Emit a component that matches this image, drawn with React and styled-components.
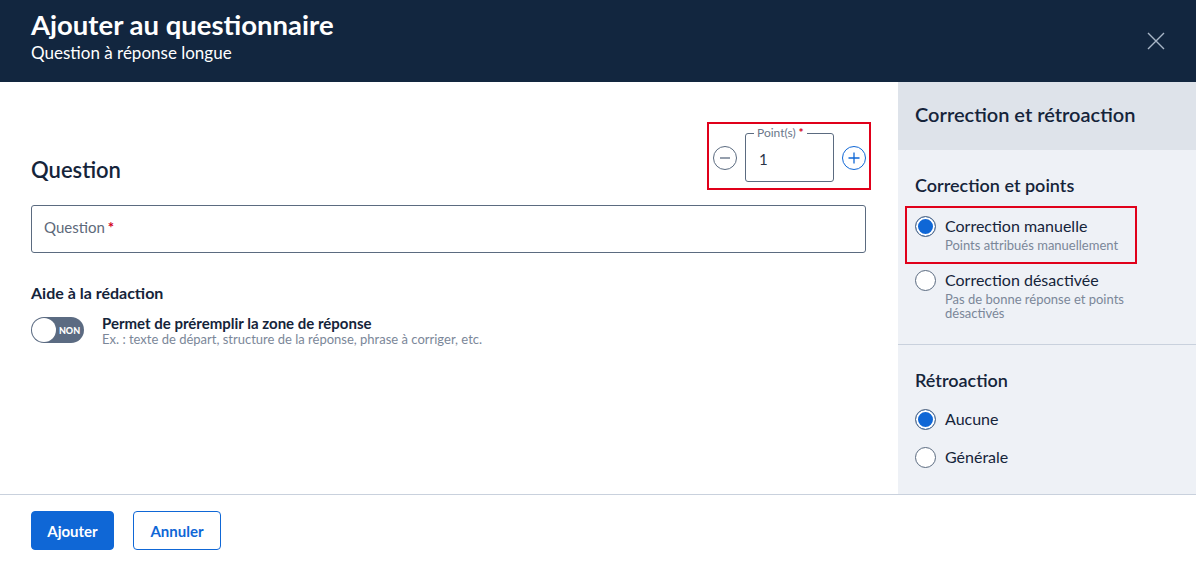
import React from 'react'
import styled, { createGlobalStyle } from 'styled-components'

const Global = createGlobalStyle`
  html, body { margin: 0; padding: 0; background: #fff; }
  body { font-family: Lato, "Noto Sans", sans-serif; color: #15243a; }
  * { box-sizing: border-box; }
`

const Page = styled.div`
  width: 1196px;
  height: 572px;
  display: flex;
  flex-direction: column;
  overflow: hidden;
`

const Header = styled.header`
  height: 82px;
  background: #12263f;
  color: #fff;
  display: flex;
  align-items: flex-start;
  justify-content: space-between;
  padding: 8px 28px 0 31px;
  h1 {
    margin: 0;
    font-size: 27.5px;
    line-height: 34px;
    font-weight: 700;
  }
  p {
    margin: 0;
    font-size: 17px;
    line-height: 22px;
  }
`

const CloseButton = styled.button`
  background: none;
  border: 0;
  padding: 0;
  margin-top: 21px;
  width: 24px;
  height: 24px;
  display: flex;
  align-items: center;
  justify-content: center;
`

const Body = styled.div`
  flex: 1;
  display: flex;
  border-bottom: 1px solid #c9d1dd;
`

const Main = styled.main`
  flex: 1;
  padding: 40px 32px 0 31px;
`

const TitleRow = styled.div`
  display: flex;
  justify-content: space-between;
  align-items: flex-end;
`

const SectionTitle = styled.h2`
  margin: 0 0 6px;
  font-size: 22px;
  line-height: 28px;
  font-weight: 600;
`

const Highlight = styled.div`
  border: 2px solid #e0001a;
  display: flex;
  align-items: center;
  gap: ${p => p.$gap || 0}px;
  padding: ${p => p.$pad};
  margin: ${p => p.$margin || 0};
  width: ${p => (p.$width ? `${p.$width}px` : 'auto')};
`

const RoundButton = styled.button`
  width: 24px;
  height: 24px;
  border-radius: 50%;
  border: 1px solid ${p => (p.$active ? '#0f67d6' : '#5b6b80')};
  background: #fff;
  padding: 0;
  display: flex;
  align-items: center;
  justify-content: center;
`

const PointsBox = styled.div`
  position: relative;
  width: 89px;
  height: 49px;
  border: 1px solid #5b6b80;
  border-radius: 3px;
  font-size: 15px;
  padding: 16px 0 0 13px;
  color: #2a3547;
  span.label {
    position: absolute;
    top: -8px;
    left: 8px;
    background: #fff;
    padding: 0 3px;
    font-size: 12px;
    line-height: 14px;
    color: #6b778a;
  }
`

const Req = styled.span`
  color: #d2001c;
  font-weight: 700;
  margin-left: 3px;
`

const Field = styled.div`
  margin-top: 15px;
  height: 48px;
  border: 1px solid #5b6b80;
  border-radius: 3px;
  padding: 12px 12px;
  font-size: 15px;
  color: #5d697a;
`

const SubTitle = styled.h3`
  margin: 30px 0 14px;
  font-size: 16px;
  line-height: 20px;
  font-weight: 700;
`

const ToggleRow = styled.div`
  display: flex;
  align-items: flex-start;
  gap: 18px;
  strong {
    display: block;
    font-size: 15px;
    line-height: 17px;
    margin-top: -2px;
  }
  small {
    display: block;
    font-size: 13px;
    line-height: 15px;
    color: #7b8799;
  }
`

const Toggle = styled.div`
  width: 53px;
  height: 26px;
  border-radius: 13px;
  background: #5b6b82;
  display: flex;
  align-items: center;
  padding: 0 1px;
  flex-shrink: 0;
  &::before {
    content: '';
    width: 24px;
    height: 24px;
    border-radius: 50%;
    background: #fff;
  }
  span {
    flex: 1;
    text-align: center;
    color: #fff;
    font-size: 9px;
    font-weight: 900;
  }
`

const Sidebar = styled.aside`
  width: 298px;
  background: #eef1f6;
`

const SideHeader = styled.div`
  height: 68px;
  background: #dee3ea;
  display: flex;
  align-items: center;
  padding: 0 17px 4px;
  font-size: 20px;
  font-weight: 600;
`

const SideSection = styled.section`
  padding: ${p => p.$pad};
  border-top: ${p => (p.$divided ? '1px solid #c9d1dd' : 'none')};
  h4 {
    margin: 0 0 10px 0;
    padding-left: 17px;
    font-size: 18px;
    line-height: 22px;
    font-weight: 600;
  }
`

const RadioItem = styled.label`
  display: flex;
  gap: 9px;
  align-items: flex-start;
  padding: ${p => p.$pad || '0'};
  margin-bottom: ${p => p.$mb || 0}px;
`

const RadioDot = styled.span`
  width: 21px;
  height: 21px;
  border-radius: 50%;
  border: 1px solid #5b6b80;
  background: ${p => (p.$on ? '#0f67d6' : '#fff')};
  box-shadow: ${p => (p.$on ? 'inset 0 0 0 2px #fff' : 'none')};
  flex-shrink: 0;
`

const RadioText = styled.div`
  div {
    font-size: 16px;
    line-height: 20px;
  }
  small {
    display: block;
    margin-top: 2px;
    font-size: 13px;
    line-height: 14px;
    color: #7b8799;
    max-width: 190px;
  }
`

const Footer = styled.footer`
  height: 77px;
  display: flex;
  align-items: flex-start;
  gap: 19px;
  padding: 16px 31px;
`

const Btn = styled.button`
  height: 39px;
  width: ${p => (p.$primary ? 83 : 88)}px;
  padding: 0;
  border-radius: 4px;
  border: 1px solid #0f67d6;
  background: ${p => (p.$primary ? '#0f67d6' : '#fff')};
  color: ${p => (p.$primary ? '#fff' : '#0f67d6')};
  font-family: inherit;
  font-size: 15px;
  font-weight: 700;
`

const Radio = ({ on, label, hint, pad, mb }) => (
  <RadioItem $pad={pad} $mb={mb}>
    <RadioDot $on={on} />
    <RadioText>
      <div>{label}</div>
      {hint && <small>{hint}</small>}
    </RadioText>
  </RadioItem>
)

export default function App() {
  return (
    <Page>
      <Global />
      <Header>
        <div>
          <h1>Ajouter au questionnaire</h1>
          <p>Question à réponse longue</p>
        </div>
        <CloseButton aria-label="Fermer">
          <svg width="18" height="18" viewBox="0 0 18 18" stroke="#a9b6c7" strokeWidth="1.4">
            <path d="M1 1 L17 17 M17 1 L1 17" />
          </svg>
        </CloseButton>
      </Header>
      <Body>
        <Main>
          <TitleRow>
            <SectionTitle>Question</SectionTitle>
            <Highlight $gap={8} $pad="9px 3px 6px 4px" $margin="0 -5px 0 0">
              <RoundButton>
                <svg width="14" height="14" viewBox="0 0 14 14" stroke="#5b6b80" strokeWidth="1.3">
                  <path d="M2 7 H12" />
                </svg>
              </RoundButton>
              <PointsBox>
                <span className="label">Point(s)<Req>*</Req></span>
                1
              </PointsBox>
              <RoundButton $active>
                <svg width="14" height="14" viewBox="0 0 14 14" stroke="#0f67d6" strokeWidth="1.3">
                  <path d="M1.5 7 H12.5 M7 1.5 V12.5" />
                </svg>
              </RoundButton>
            </Highlight>
          </TitleRow>
          <Field>
            Question<Req>*</Req>
          </Field>
          <SubTitle>Aide à la rédaction</SubTitle>
          <ToggleRow>
            <Toggle><span>NON</span></Toggle>
            <div>
              <strong>Permet de préremplir la zone de réponse</strong>
              <small>Ex. : texte de départ, structure de la réponse, phrase à corriger, etc.</small>
            </div>
          </ToggleRow>
        </Main>
        <Sidebar>
          <SideHeader>Correction et rétroaction</SideHeader>
          <SideSection $pad="24px 0 24px 0">
            <h4>Correction et points</h4>
            <Highlight $pad="8px 10px 10px 8px" $margin="0 0 6px 7px" $width={232}>
              <Radio on label="Correction manuelle" hint="Points attribués manuellement" />
            </Highlight>
            <Radio label="Correction désactivée" hint="Pas de bonne réponse et points désactivés" pad="0 0 0 17px" />
          </SideSection>
          <SideSection $divided $pad="24px 0 0 0">
            <h4>Rétroaction</h4>
            <Radio on label="Aucune" pad="8px 0 0 17px" mb={17} />
            <Radio label="Générale" pad="0 0 0 17px" />
          </SideSection>
        </Sidebar>
      </Body>
      <Footer>
        <Btn $primary>Ajouter</Btn>
        <Btn>Annuler</Btn>
      </Footer>
    </Page>
  )
}
